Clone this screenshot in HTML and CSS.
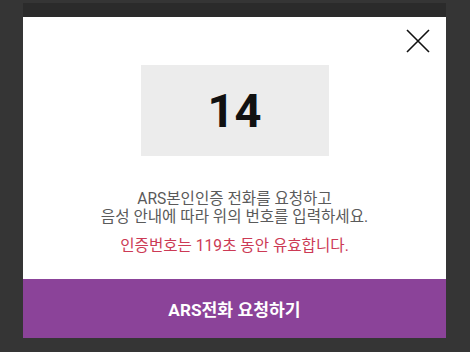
FILE: index.html
```html
<!DOCTYPE html>
<html lang="ko">
<head>
  <meta charset="UTF-8" />
  <title>ARS 본인인증</title>
  <link rel="stylesheet" href="styles.css">
</head>
<body>
  <div class="modal">
    <div class="modal-top"></div>
    <div class="modal-body">
      <button class="close-btn" title="닫기">
        <svg width="24" height="24" viewBox="0 0 24 24">
          <path d="M1 1 L23 23 M23 1 L1 23" stroke="#111" stroke-width="1.6" fill="none" />
        </svg>
      </button>
      <div class="code-box">14</div>
      <p class="guide">ARS본인인증 전화를 요청하고<br>음성 안내에 따라 위의 번호를 입력하세요.</p>
      <p class="limit">인증번호는 119초 동안 유효합니다.</p>
    </div>
    <button class="ars-btn">ARS전화 요청하기</button>
  </div>
</body>
</html>
```

FILE: styles.css
```css
body {
  margin: 0; background: #353535; height: 352px; overflow: hidden;
  font-family: Roboto, "Noto Sans CJK KR", sans-serif;
}
.modal { width: 423px; margin: 3px 0 0 23px; }
.modal-top { height: 14px; background: #2b2b2b; }
.modal-body {
  position: relative; background: #fff; height: 262px;
  display: flex; flex-direction: column; align-items: center;
}
.close-btn {
  position: absolute; top: 12px; right: 16px;
  background: none; border: none; padding: 0; cursor: pointer;
}
.close-btn svg { display: block; }
.code-box {
  margin-top: 48px; width: 188px; height: 91px; background: #ececec;
  display: flex; justify-content: center; align-items: center;
  font-size: 47px; font-weight: bold; color: #111;
}
.guide {
  margin: 34px 0 0; text-align: center; color: #5a5a5a;
  font-size: 15.6px; line-height: 18px;
}
.limit {
  margin: 11px 0 0; text-align: center; color: #cc3a55;
  font-size: 15.6px; line-height: 18px;
}
.ars-btn {
  display: block; width: 100%; height: 59px; border: none; cursor: pointer;
  background: #8b4399; color: #fff; font-family: inherit;
  font-size: 17.2px; font-weight: bold;
}
```
